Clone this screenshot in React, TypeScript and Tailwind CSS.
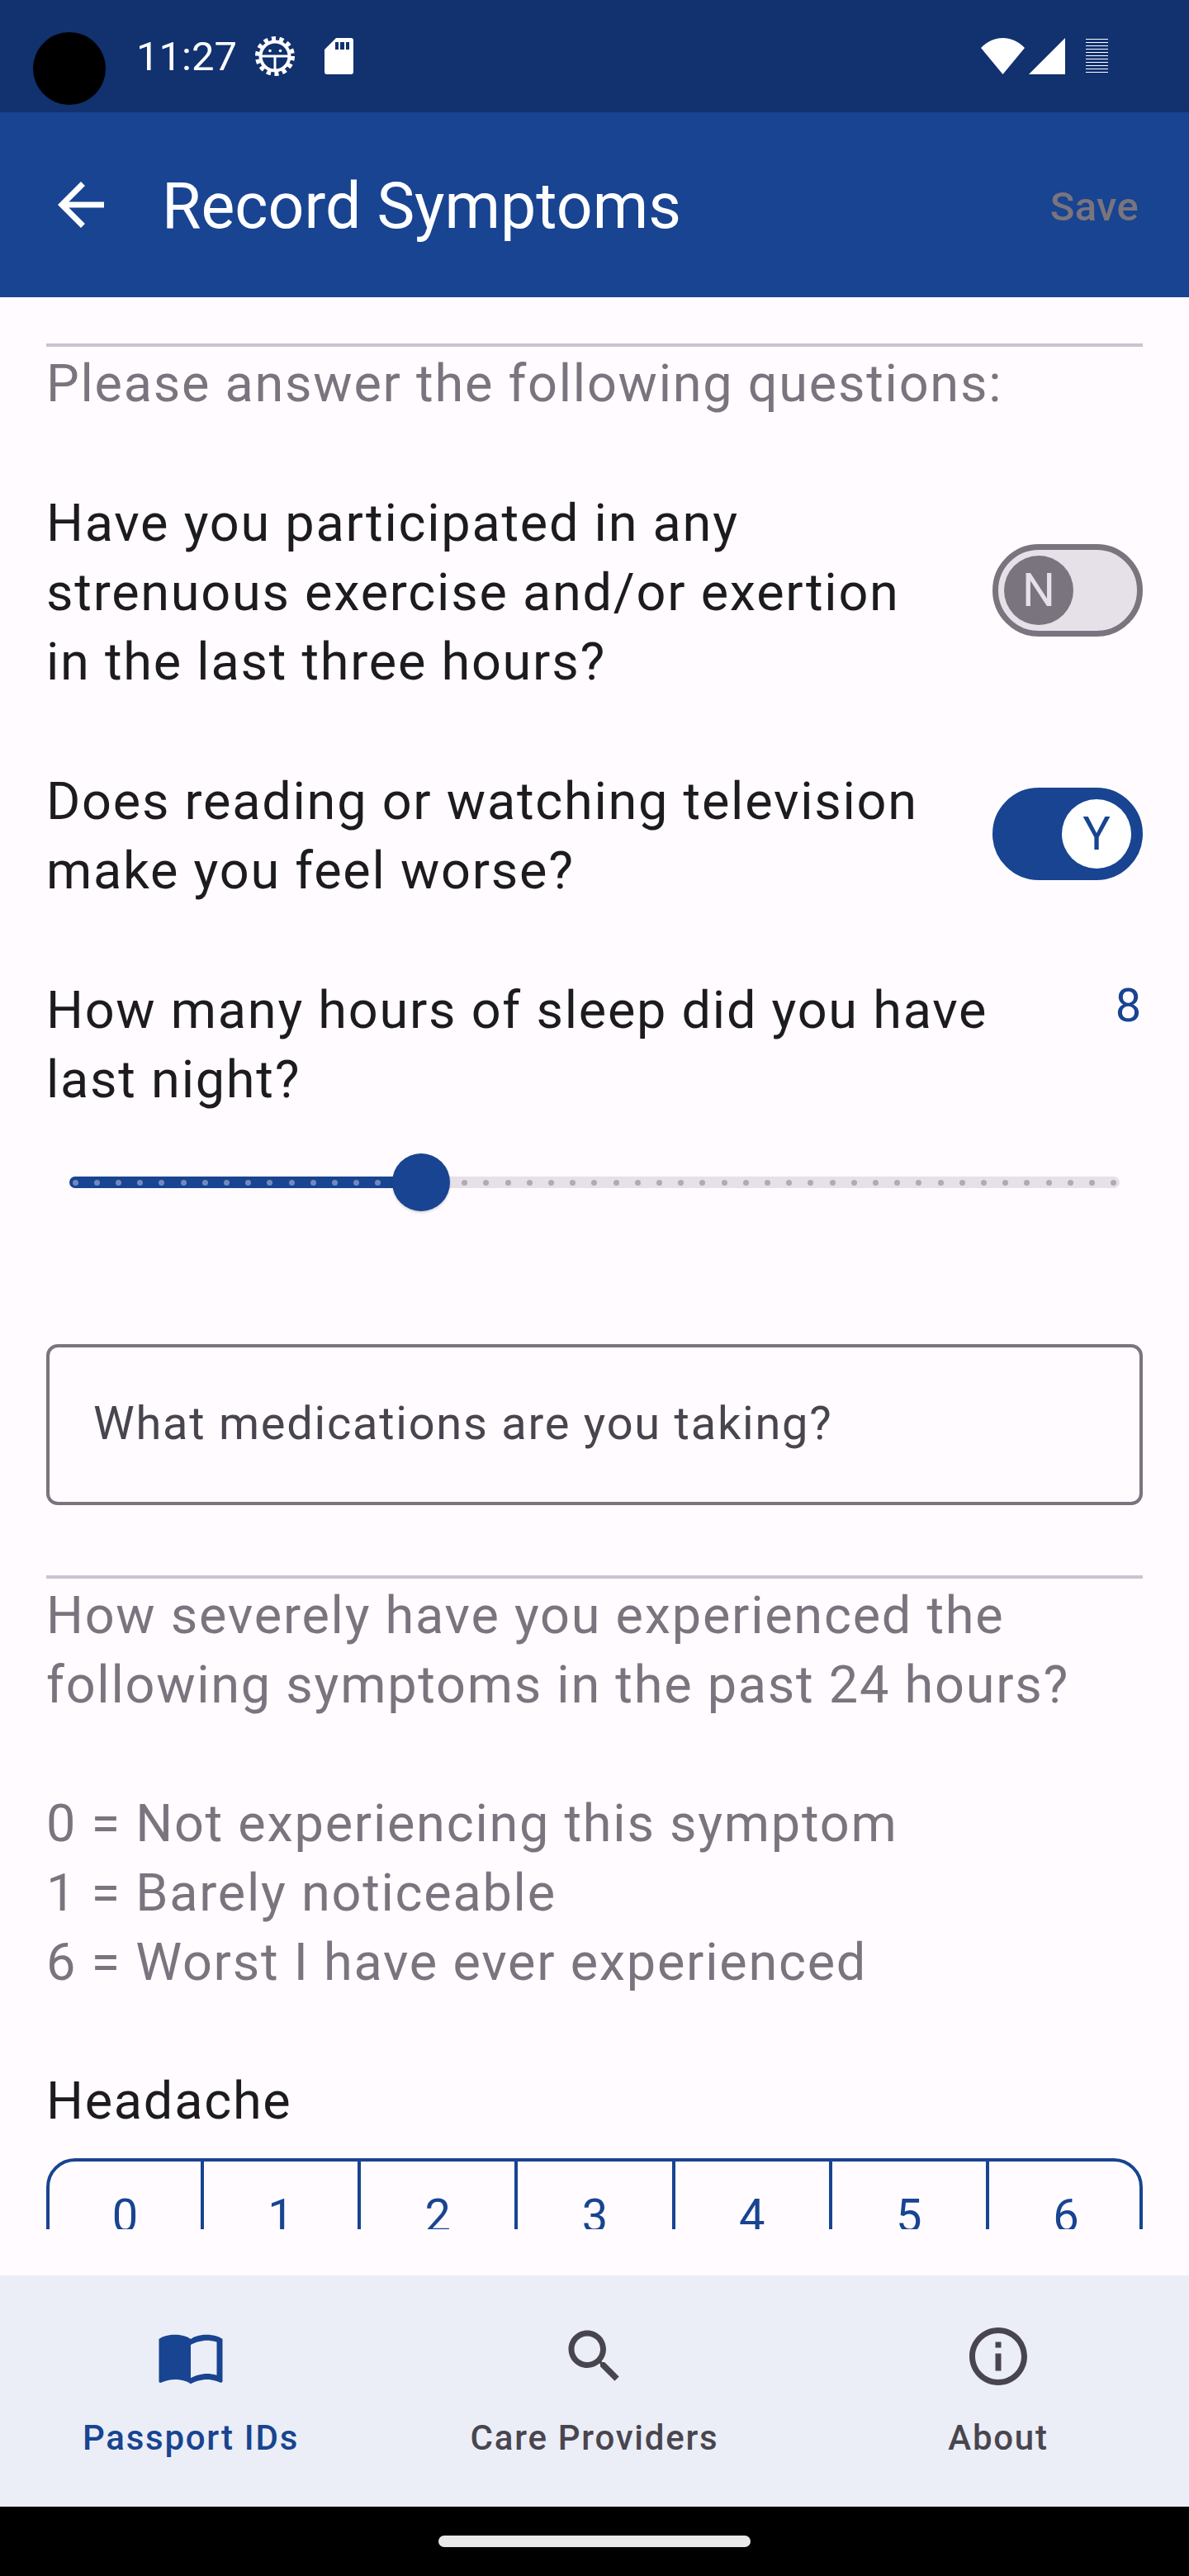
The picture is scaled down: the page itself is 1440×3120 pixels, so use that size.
const TICKS = Array.from({ length: 49 }, (_, i) => i);
const SLEEP_TICK = 16;
const TICK_STEP = 26.2;
const SCALE = [0, 1, 2, 3, 4, 5, 6];

function GearIcon() {
  return (
    <svg width="50" height="50" viewBox="0 0 50 50" className="shrink-0" fill="none">
      <circle cx="25" cy="25" r="21.5" stroke="white" strokeWidth="5" strokeDasharray="5.2 4.45" />
      <circle cx="25" cy="25" r="17.5" stroke="white" strokeWidth="4" />
      <path d="M7 25H43M25 25V43" stroke="white" strokeWidth="3" />
      <circle cx="19" cy="18.5" r="1.8" fill="white" />
      <circle cx="31.5" cy="18.5" r="1.8" fill="white" />
    </svg>
  );
}

function SdIcon() {
  return (
    <svg width="35" height="44" viewBox="0 0 35 44" className="shrink-0">
      <path
        fillRule="evenodd"
        fill="white"
        d="M14 0H32a3 3 0 0 1 3 3V41a3 3 0 0 1-3 3H3a3 3 0 0 1-3-3V14ZM13 5V14H17V5ZM19 5V14H24V5ZM26 5V14H30V5Z"
      />
    </svg>
  );
}

function Switch({ on, letter }: { on: boolean; letter: string }) {
  return (
    <div
      className={`w-[182px] h-[112px] shrink-0 rounded-full border-[7px] flex items-center ${
        on ? 'bg-[#184491] border-[#184491] justify-end pr-[7px]' : 'bg-[#e6e0e9] border-[#79747e] pl-[7px]'
      }`}
    >
      <div
        className={`w-[84px] h-[84px] rounded-full flex items-center justify-center text-[56px] leading-none tracking-normal ${
          on ? 'bg-white text-[#184491]' : 'bg-[#79747e] text-[#e6e0e9]'
        }`}
      >
        {letter}
      </div>
    </div>
  );
}

function SleepSlider() {
  const center = 7 + SLEEP_TICK * TICK_STEP;
  return (
    <div className="relative mt-[50px] mx-[28px] h-[70px] flex items-center">
      <div className="relative w-full h-[14px] rounded-full bg-[#e6e0e9] overflow-hidden">
        <div className="absolute left-0 top-0 h-full bg-[#184491]" style={{ width: center }} />
        <div className="absolute inset-0 flex items-center justify-between px-[3.5px]">
          {TICKS.map((i) => (
            <div
              key={i}
              className={`w-[7px] h-[7px] rounded-full ${i <= SLEEP_TICK ? 'bg-[#7389bd]' : 'bg-[#b0a9b8]'}`}
            />
          ))}
        </div>
      </div>
      <div
        className="absolute top-0 w-[70px] h-[70px] rounded-full bg-[#184491] shadow-[0_2px_3px_rgba(0,0,0,0.15)]"
        style={{ left: center - 35 }}
      />
    </div>
  );
}

function NavItem({ label, active, path }: { label: string; active?: boolean; path: string }) {
  return (
    <div className={`w-[362px] flex flex-col items-center ${active ? 'text-[#184491]' : 'text-[#49454f]'}`}>
      <svg width="84" height="84" viewBox="0 0 24 24" fill="currentColor">
        <path d={path} />
      </svg>
      <div className="mt-[29px] text-[42px] leading-[56px] font-medium tracking-[1.75px]">{label}</div>
    </div>
  );
}

export default function App() {
  return (
    <div className="relative w-[1440px] h-[3120px] flex flex-col bg-[#fffbfe] font-['Roboto',sans-serif] text-[#1c1b1f]">
      {/* Status bar */}
      <div className="h-[136px] shrink-0 bg-[#11316f] flex items-center pl-[165px] text-white">
        <span className="text-[49px] leading-none">11:27</span>
        <div className="ml-[21px]">
          <GearIcon />
        </div>
        <div className="ml-[35px]">
          <SdIcon />
        </div>
        <div className="ml-auto flex items-center">
          <svg width="53" height="44" viewBox="0 0 53 44">
            <path d="M0 12C15 -4 38 -4 53 12L26.5 44Z" fill="white" />
          </svg>
          <svg width="44" height="44" viewBox="0 0 44 44" className="ml-[5px]">
            <path d="M44 0V44H0Z" fill="white" />
          </svg>
          <div className="ml-[25px] mr-[98px] w-[27px] h-[42px] bg-[repeating-linear-gradient(180deg,#ffffff_0,#ffffff_1.2px,transparent_1.2px,transparent_4px)]" />
        </div>
      </div>
      <div className="absolute left-[40px] top-[39px] w-[88px] h-[88px] rounded-full bg-black" />

      {/* App bar */}
      <div className="h-[224px] shrink-0 bg-[#184491] flex items-center pl-[56px] pr-[61px]">
        <svg width="84" height="84" viewBox="0 0 24 24" fill="white">
          <path d="M20 11H7.83l5.59-5.59L12 4l-8 8 8 8 1.41-1.41L7.83 13H20v-2z" />
        </svg>
        <div className="ml-[56px] pt-[5px] text-[77px] leading-none text-white">Record Symptoms</div>
        <div className="ml-auto pt-[4px] text-[49px] leading-none font-medium tracking-[0.35px] text-[#79747e]">Save</div>
      </div>

      {/* Scrolling form */}
      <div className="flex-1 min-h-0 pb-[56px]">
        <div className="h-full overflow-hidden px-[56px] pt-[56px] text-[63px] leading-[84px] tracking-[1.75px]">
          <div className="h-[4px] bg-[#cac4d0]" />
          <div className="translate-y-[3px] text-[#79747e]">Please answer the following questions:</div>

          <div className="mt-[85px] flex items-center justify-between">
            <div className="w-[1080px] translate-y-[3px]">
              Have you participated in any strenuous exercise and/or exertion in the last three hours?
            </div>
            <Switch on={false} letter="N" />
          </div>

          <div className="mt-[85px] flex items-center justify-between">
            <div className="w-[1080px] translate-y-[3px]">Does reading or watching television make you feel worse?</div>
            <Switch on letter="Y" />
          </div>

          <div className="mt-[85px] flex justify-between">
            <div className="w-[1230px] translate-y-[3px]">How many hours of sleep did you have last night?</div>
            <div className="text-[56px] text-[#184491] -mt-[3px]">8</div>
          </div>
          <SleepSlider />

          <div className="mt-[161px] h-[195px] rounded-[14px] border-[4px] border-[#79747e] flex items-center pl-[53px] pb-[4px] text-[56px] text-[#49454f]">
            What medications are you taking?
          </div>

          <div className="mt-[85px] h-[4px] bg-[#cac4d0]" />
          <div className="translate-y-[3px] text-[#79747e]">
            How severely have you experienced the following symptoms in the past 24 hours?
            <div className="mt-[84px]">0 = Not experiencing this symptom</div>
            <div>1 = Barely noticeable</div>
            <div>6 = Worst I have ever experienced</div>
          </div>

          <div className="mt-[84px] translate-y-[3px]">Headache</div>
          <div className="mt-[30px] h-[200px] flex rounded-[35px] border-[4px] border-[#184491] text-[56px] tracking-normal text-[#184491]">
            {SCALE.map((n) => (
              <div
                key={n}
                className={`pt-[24px] text-center ${
                  n === 0
                    ? 'w-[183px]'
                    : n === 6
                      ? 'flex-1 border-l-[4px] border-[#184491] pl-[4px]'
                      : 'w-[190.2px] border-l-[4px] border-[#184491]'
                }`}
              >
                {n}
              </div>
            ))}
          </div>
        </div>
      </div>

      {/* Bottom navigation */}
      <div className="h-[280px] shrink-0 bg-[#ebeef6] pt-[56px] px-[50px] flex justify-between">
        <NavItem
          active
          label="Passport IDs"
          path="M21 5c-1.11-.35-2.33-.5-3.5-.5-1.95 0-4.05.4-5.5 1.5-1.45-1.1-3.55-1.5-5.5-1.5S2.45 4.9 1 6v14.65c0 .25.25.5.5.5.1 0 .15-.05.25-.05C3.1 20.45 5.05 20 6.5 20c1.95 0 4.05.4 5.5 1.5 1.35-.85 3.8-1.5 5.5-1.5 1.65 0 3.35.3 4.75 1.05.1.05.15.05.25.05.25 0 .5-.25.5-.5V6c-.6-.45-1.25-.75-2-1zm0 13.5c-1.1-.35-2.3-.5-3.5-.5-1.7 0-4.15.65-5.5 1.5V8c1.35-.85 3.8-1.5 5.5-1.5 1.2 0 2.4.15 3.5.5v11.5z"
        />
        <NavItem
          label="Care Providers"
          path="M15.5 14h-.79l-.28-.27C15.41 12.59 16 11.11 16 9.5 16 5.91 13.09 3 9.5 3S3 5.91 3 9.5 5.91 16 9.5 16c1.61 0 3.09-.59 4.23-1.57l.27.28v.79l5 4.99L20.49 19l-4.99-5zm-6 0C7.01 14 5 11.99 5 9.5S7.01 5 9.5 5 14 7.01 14 9.5 11.99 14 9.5 14z"
        />
        <NavItem
          label="About"
          path="M11 7h2v2h-2zm0 4h2v6h-2zm1-9C6.48 2 2 6.48 2 12s4.48 10 10 10 10-4.48 10-10S17.52 2 12 2zm0 18c-4.41 0-8-3.59-8-8s3.59-8 8-8 8 3.59 8 8-3.59 8-8 8z"
        />
      </div>

      {/* Gesture area */}
      <div className="h-[84px] shrink-0 bg-black flex justify-center pt-[35px]">
        <div className="w-[378px] h-[14px] rounded-full bg-[#e8e8e8]" />
      </div>
    </div>
  );
}
